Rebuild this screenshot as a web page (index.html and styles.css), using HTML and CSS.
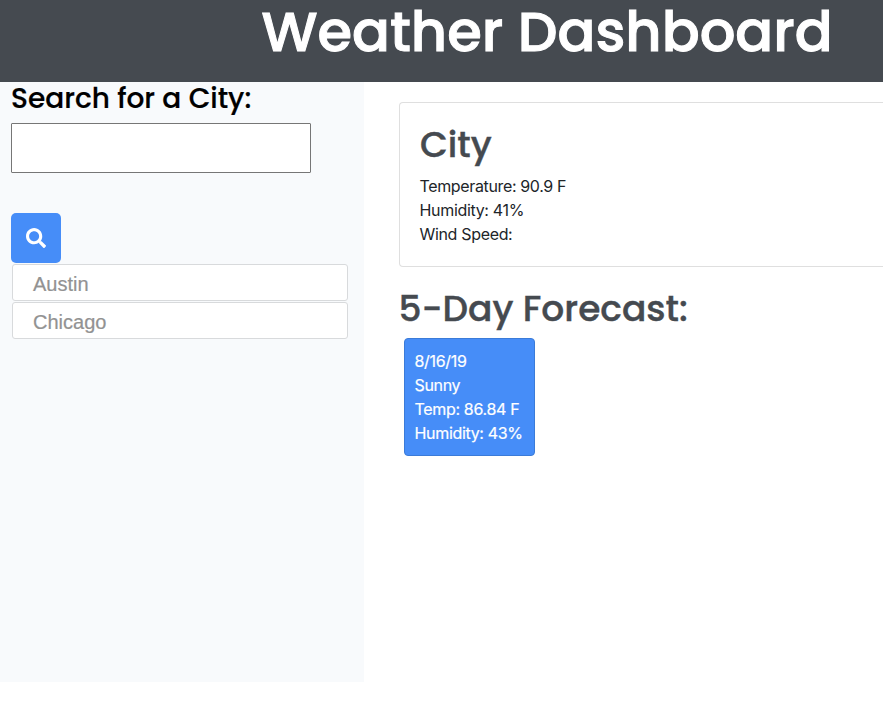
FILE: index.html
```html
<!DOCTYPE html>
<html lang="en">
<head>
<meta charset="utf-8">
<title>Weather Dashboard</title>
<link rel="stylesheet" href="styles.css">
</head>
<body>
<header class="header"><h1>Weather Dashboard</h1></header>
<div class="layout">
<aside class="sidebar">
<h3>Search for a City:</h3>
<input class="search" type="text" aria-label="City">
<button class="go" aria-label="Search"><svg width="20" height="20" viewBox="0 0 512 512"><path fill="#fff" d="M505 442.700 405.300 343c-4.500-4.500-10.600-7-17-7H372c27.600-35.300 44-79.700 44-128C416 93.100 322.900 0 208 0S0 93.100 0 208s93.100 208 208 208c48.300 0 92.700-16.400 128-44v16.300c0 6.400 2.500 12.500 7 17l99.700 99.700c9.400 9.400 24.600 9.400 33.900 0l28.300-28.300c9.400-9.400 9.400-24.600.1-34zM208 336c-70.700 0-128-57.200-128-128 0-70.700 57.200-128 128-128 70.700 0 128 57.200 128 128 0 70.700-57.200 128-128 128z"/></svg></button>
<ul class="history"><li>Austin</li><li>Chicago</li></ul>
</aside>
<main class="main">
<section class="card">
<h2>City</h2>
<p class="temperature">Temperature: 90.9 F</p><p>Humidity: 41%</p><p>Wind Speed:</p>
</section>
<h2 class="title">5-Day Forecast:</h2>
<section class="day"><p>8/16/19</p><p>Sunny</p><p>Temp: 86.84 F</p><p>Humidity: 43%</p></section>
</main>
</div>
</body>
</html>
```
FILE: styles.css
```css
* { box-sizing: border-box; }
body { margin: 0; background: #fff; color: #212529; font: 16px/24px Inter, sans-serif; letter-spacing: -0.33px; }
h1, h2, h3, p, ul { margin: 0; padding: 0; }
h1, h2, h3 { font-family: Poppins, "Open Sans", sans-serif; font-weight: 500; letter-spacing: 0; white-space: nowrap; -webkit-text-stroke: 0.4px currentColor; }
.header { height: 82px; padding-left: 261.500px; background: #454a50; color: #fff; }
h1 { font-size: 56px; line-height: 63px; -webkit-text-stroke-width: 1px; }
.layout { display: flex; }
.sidebar { width: 364px; height: 600px; padding: 0 11px; background: #f8fafc; color: #000; flex: none; }
h3 { font-size: 28px; line-height: 34px; -webkit-text-stroke-width: 0.2px; }
.search { display: block; width: 300px; height: 50px; margin-top: 7px; border: 1px solid #767676; border-radius: 1px; background: #fff; }
.go { display: flex; align-items: center; justify-content: center; width: 50px; height: 50px; margin-top: 40px; padding: 0; border: 0; border-radius: 5px; background: #468df8; }
.history { list-style: none; padding: 1px; }
.history li { width: 336px; height: 37px; margin-bottom: 1px; padding: 0 20px; border: 1px solid #d8dadc; border-radius: 3px; background: #fff; color: #929292; font: 20px/38px "Liberation Sans", sans-serif; letter-spacing: 0; -webkit-text-stroke: 0.2px currentColor; }
.main { flex: 1; min-width: 0; padding: 20px 0 0 35px; }
.card { height: 165px; padding: 20px; border: 1px solid #dfdfdf; border-right: 0; border-radius: 4px 0 0 4px; }
h2 { height: 51px; color: #454a50; font-size: 36px; line-height: 44px; }
.card p { margin-left: -0.5px; }
.temperature { letter-spacing: -0.36px; }
.title { margin-top: 20px; margin-left: -0.5px; }
.day { width: 131px; height: 118px; margin-left: 5px; padding: 10px 9.500px; border: 1px solid #3b7bd8; border-radius: 4px; background: #468df8; color: #fff; white-space: nowrap; -webkit-text-stroke: 0.2px currentColor; }
```
